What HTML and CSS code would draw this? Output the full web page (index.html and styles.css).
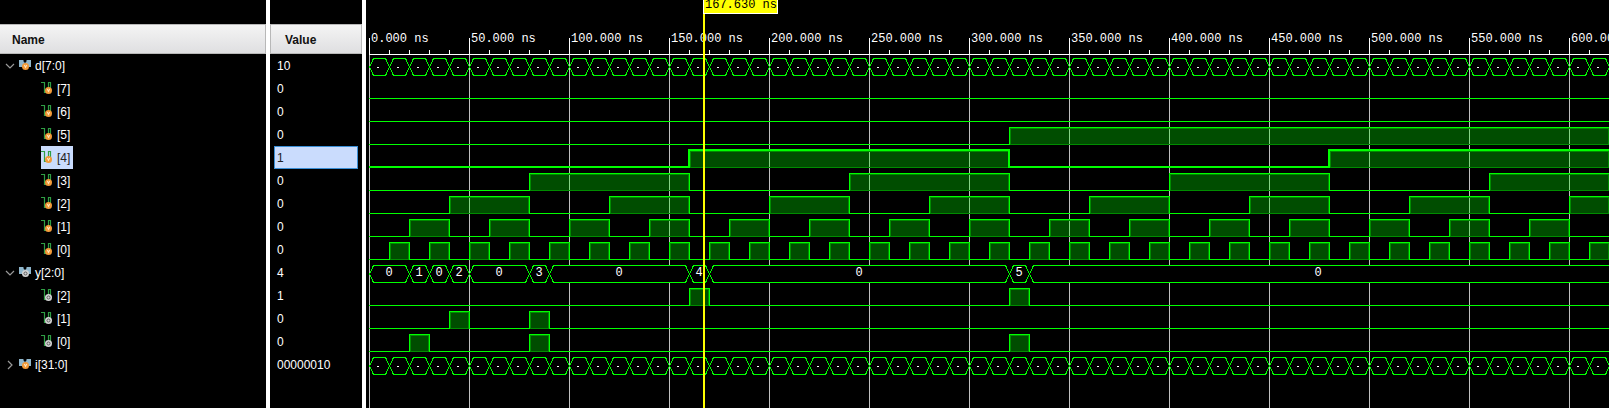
FILE: index.html
```html
<!DOCTYPE html>
<html lang="en">
<head>
<meta charset="utf-8">
<title>Waveform</title>
<link rel="stylesheet" href="styles.css">
</head>
<body>
<svg class="symbols" aria-hidden="true">
  <defs>
    <symbol id="in" viewBox="0 0 6 6"><circle cx="3" cy="3" r="3" fill="#f29a38"/><path d="M2 1.800l1 2 1-2" fill="none" stroke="#ffe6c0" stroke-width=".9"/></symbol>
    <symbol id="out" viewBox="0 0 6 6"><circle cx="3" cy="3" r="3" fill="#d4d4d4"/><circle cx="3" cy="3" r="1.3" fill="none" stroke="#555" stroke-width=".8"/></symbol>
    <symbol id="bus" viewBox="0 0 12 11"><path d="M0 0h4l1.500 3h1L8 0h4v7H9L6 8 3 7H0z" fill="#8fb6cc"/><path d="M4 0h1v2h2V0h1L6.500 3.500h-1z" fill="#4a606c"/></symbol>
    <symbol id="bit" viewBox="0 0 12 12"><path d="M0 .5h3.500V10.500H6M7.500 9V.5h2V9" fill="none" stroke="#2f9e44" stroke-width="1.200"/></symbol>
  </defs>
</svg>
<main class="viewer">
  <section class="names">
    <h2 class="head">Name</h2>
    <ul class="tree" id="names"></ul>
  </section>
  <section class="values">
    <h2 class="head">Value</h2>
    <ul class="tree" id="values"></ul>
  </section>
  <section class="waves" id="waves"></section>
</main>
<script src="wave.js"></script>
</body>
</html>
```

FILE: styles.css
```css
* { box-sizing: border-box; }
body { margin: 0; background: #000; color: #fff; font: 12px/25px "Liberation Sans", Arial, sans-serif; }
.symbols { position: absolute; width: 0; height: 0; }
.viewer { display: flex; min-height: 100vh; overflow: hidden; }
.names, .values { flex: none; padding-top: 24px; border-right: 4px solid #fff; }
.names { width: 270px; }
.values { width: 96px; }
.head { height: 30px; margin: 0; padding-left: 12px; border: 1px solid #b8b8b8; border-width: 1px 1px 1px 0; background: linear-gradient(#f4f4f4, #dfdfe1); color: #111; font: bold 12px/30px "Liberation Sans", Arial, sans-serif; }
.values .head { padding-left: 14px; border-left-width: 1px; }
.tree { list-style: none; margin: 0; padding: 0; }
.row { display: flex; align-items: flex-start; height: 23px; }
.names .row { padding-left: 5px; }
.toggle { display: flex; width: 10px; height: 23px; margin-right: 4px; padding: 0; border: 0; background: none; align-items: center; }
.toggle svg { width: 10px; height: 10px; }
.chip { display: flex; height: 23px; padding-right: 3px; }
.child .chip { margin-left: 36px; }
.chip svg { flex: none; width: 12px; height: 13px; margin: 5px 4px 0 0; overflow: visible; }
.selected .chip { background: #cadcfd; color: #222; }
.values .row { margin: 0 4px; padding-left: 3px; }
.values .selected { border: 1px solid #3a8fd6; padding-left: 2px; background: #cadcfd; color: #222; line-height: 23px; }
.waves { flex: 1; min-width: 0; overflow: hidden; }
.plot { display: block; }
.plot text { font: 12px "Liberation Mono", "Courier New", monospace; fill: #fff; white-space: pre; }
.plot .dark { fill: #000; }
.mid { text-anchor: middle; }
.crisp { shape-rendering: crispEdges; }
.line { fill: none; stroke: #0f0; }
.thick { stroke-width: 2; }
.fill { fill: rgba(0, 255, 0, .3); }
.edge { fill: none; stroke: #008c00; }
.grid { stroke: #c0c0c0; }
.ruler { stroke: #fff; }
.bus { fill: #000; stroke: #0f0; }
.cursor { fill: #ff0; }
.flag { fill: #ff0; stroke: #fff; }
```

FILE: wave.js
```js
const signals = [
  { name: 'd[7:0]', value: '10', port: 'in', bus: 'count', open: true },
  ...[7, 6, 5, 4, 3, 2, 1, 0].map(b => ({ name: `[${b}]`, value: b === 4 ? '1' : '0', port: 'in', child: true, bit: b, selected: b === 4 })),
  { name: 'y[2:0]', value: '4', port: 'out', bus: 'y', open: true },
  { name: '[2]', value: '1', port: 'out', child: true, highs: [[160, 170], [320, 330]] },
  { name: '[1]', value: '0', port: 'out', child: true, highs: [[40, 50], [80, 90]] },
  { name: '[0]', value: '0', port: 'out', child: true, highs: [[20, 30], [80, 90], [320, 330]] },
  { name: 'i[31:0]', value: '00000010', port: 'in', bus: 'count', open: false }
];
const yValues = [[0, '0'], [20, '1'], [30, '0'], [40, '2'], [50, '0'], [80, '3'], [90, '0'], [160, '4'], [170, '0'], [320, '5'], [330, '0']];
const ROW = 23, TOP = 54, ORIGIN = 3, CURSOR = 167.63;
const x = ns => ORIGIN + ns * 2;

function icon(s) {
  if (s.bus) return `<svg viewBox="0 0 12 13"><use href="#bus" width="12" height="11" y="1"/><use href="#${s.port}" x="3" y="4" width="7" height="7"/></svg>`;
  return `<svg viewBox="0 0 12 13"><use href="#bit" width="12" height="12"/><use href="#${s.port}" x="4" y="5" width="7" height="7"/></svg>`;
}

document.getElementById('names').innerHTML = signals.map(s => {
  const arrow = s.open ? 'M1 3l4 4 4-4' : 'M3 1l4 4-4 4';
  const toggle = s.child ? '' : `<button class="toggle" aria-label="Toggle ${s.name}" aria-expanded="${s.open}"><svg viewBox="0 0 10 10"><path d="${arrow}" fill="none" stroke="#999" stroke-width="1.2"/></svg></button>`;
  return `<li class="row ${s.child ? 'child' : ''} ${s.selected ? 'selected' : ''}">${toggle}<span class="chip">${icon(s)}${s.name}</span></li>`;
}).join('');
document.getElementById('values').innerHTML = signals.map(s => `<li class="row ${s.selected ? 'selected' : ''}">${s.value}</li>`).join('');

function drawBit(s, low, end, width) {
  const high = low - 17;
  const half = s.selected ? 0 : .5;
  const spans = [...(s.highs || [])];
  if (s.bit < 6) {
    const step = 10 * 2 ** s.bit;
    for (let t = step; t < end; t += 2 * step) spans.push([t, Math.min(t + step, end)]);
  }
  let body = '', line = `M${x(0)} ${low + half}`;
  spans.forEach(([a, b]) => {
    const w = Math.min(x(b), width) - x(a);
    if (w > 2) {
      body += `<rect class="fill" x="${x(a)}" y="${high}" width="${w}" height="17"/>`;
      body += `<rect class="edge" x="${x(a) + 1.5}" y="${high + 1.5}" width="${w - 2}" height="16"/>`;
    }
    line += `M${x(a) + half} ${low + 1}V${high + half}H${x(b) + half}V${low + 1}`;
  });
  let from = 0;
  [...spans, [end]].forEach(([a, b]) => {
    line += `M${x(from)} ${low + half}H${x(a) + 1}`;
    from = b;
  });
  return body + `<path class="line ${s.selected ? 'thick' : ''}" d="${line}"/>`;
}

function drawBus(items, y, end, width) {
  return items.map(([t, label], k) => {
    const next = k + 1 < items.length ? items[k + 1][0] : end;
    const a = x(t) + .5, b = x(next) + .5, m = y + 9;
    const visible = (a + Math.min(b, width)) / 2;
    const text = label === '-' ? `<path class="ruler" d="M${a + 7.5} ${y + 9.5}h2"/>` : `<text class="mid" x="${Math.round(visible) - 1}" y="${y + 11}">${label}</text>`;
    return `<path class="bus" d="M${a} ${m}L${a + 4} ${y + .5}H${b - 4}L${b} ${m}L${b - 4} ${y + 17.5}H${a + 4}Z"/>${text}`;
  }).join('');
}

function draw() {
  const host = document.getElementById('waves');
  const width = host.clientWidth, height = Math.max(innerHeight, TOP + ROW * signals.length);
  const end = Math.ceil(width / 20) * 10 + 10;
  let grid = '', labels = '', ruler = `M${x(0)} 54.5H${width}`;
  for (let t = 0; t < end; t += 10) {
    const px = x(t) + .5;
    if (t % 50) { ruler += `M${px} 50V54`; continue; }
    ruler += `M${px} 38V54`;
    grid += `M${px} 55V${height}`;
    labels += `<text x="${x(t) + 2}" y="42">${t}.000 ns</text>`;
  }
  const count = [];
  for (let t = 0; t < end; t += 10) count.push([t, '-']);
  const rows = signals.map((s, k) => {
    const y = TOP + ROW * k;
    return s.bus ? drawBus(s.bus === 'y' ? yValues : count, y + 4, end, width) : drawBit(s, y + 21, end, width);
  }).join('');
  const c = Math.round(x(CURSOR)) - 1;
  host.innerHTML = `<svg class="plot" width="${width}" height="${height}" role="img" aria-label="Signal waveforms">
    <g class="crisp"><path class="grid" d="${grid}"/><path class="ruler" d="${ruler}"/></g>${labels}
    <g class="crisp">${rows}<rect class="cursor" x="${c}" y="0" width="2" height="${height}"/><rect class="flag" x="${c + .5}" y="-1.5" width="74" height="15"/></g>
    <text class="dark" x="${c + 2}" y="8">${CURSOR.toFixed(3)} ns</text></svg>`;
}
draw();
addEventListener('resize', draw);
```
